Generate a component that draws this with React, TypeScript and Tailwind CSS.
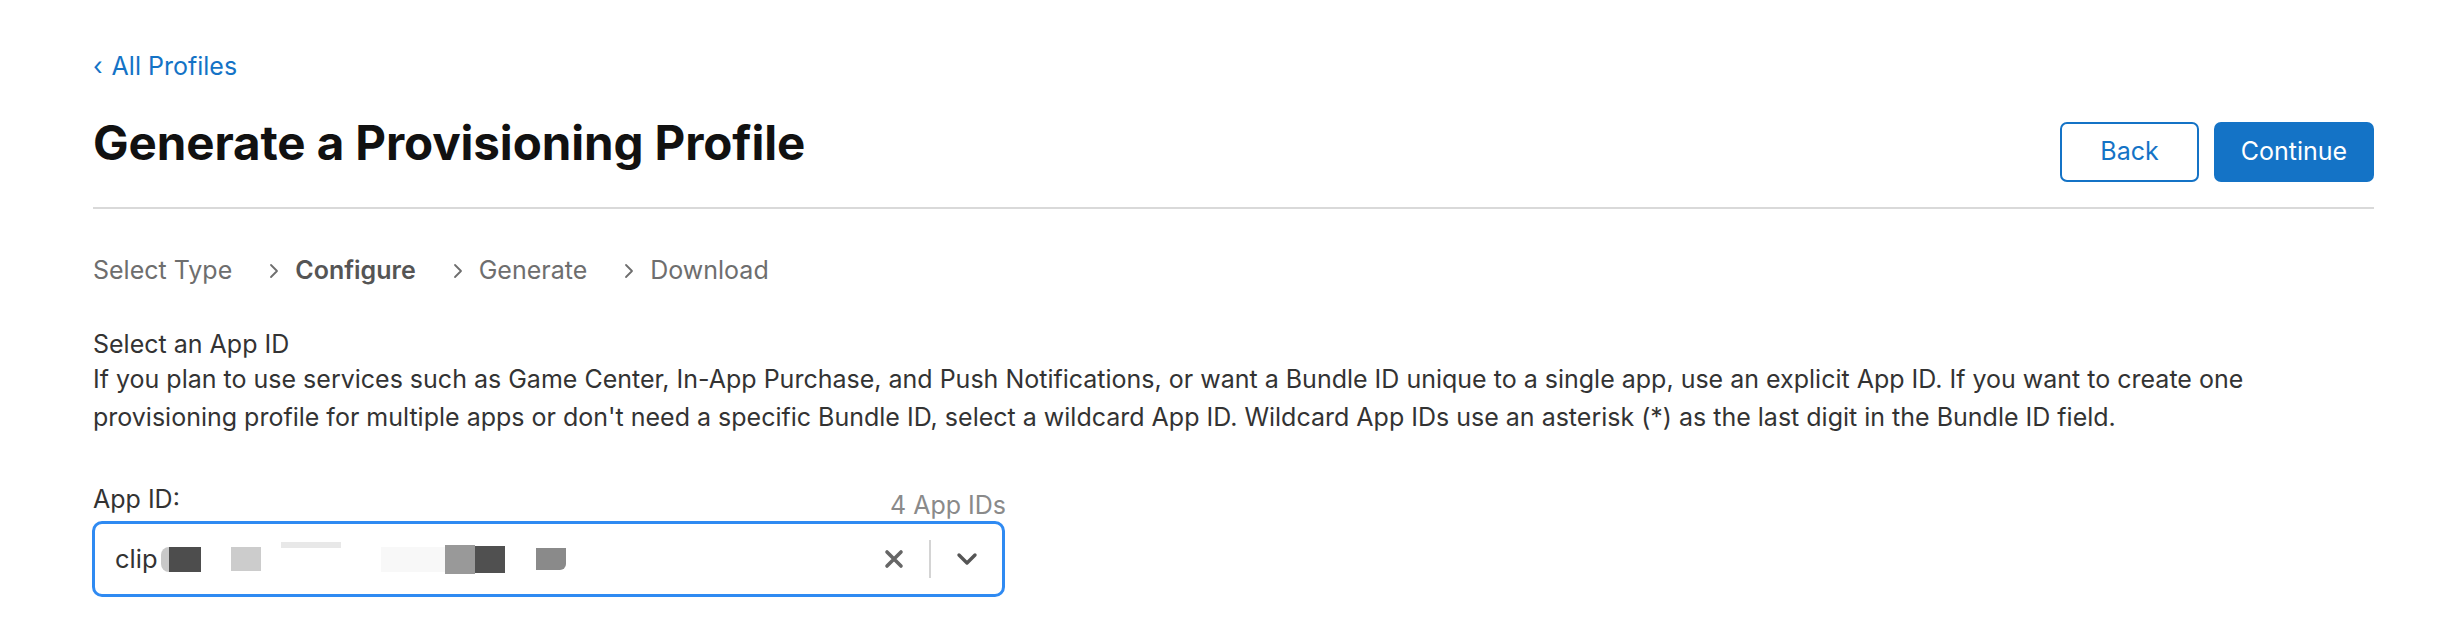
const font = { fontFamily: 'Inter, "Noto Sans", sans-serif' }

function Crumb({ label, active }: { label: string; active?: boolean }) {
  return (
    <span className={active ? 'font-semibold text-[#555]' : 'text-[#6e6e6e]'}>{label}</span>
  )
}

function Chevron() {
  return (
    <svg width="14" height="18" viewBox="0 0 14 18" className="ml-[35px] mr-[14px]">
      <path d="M4 3 L10 9 L4 15" fill="none" stroke="#6e6e6e" strokeWidth="1.8" strokeLinecap="round" strokeLinejoin="round" />
    </svg>
  )
}

export default function App() {
  return (
    <div className="min-h-screen bg-white" style={font}>
      <div className="pl-[93px] pt-[48px] w-[2374px]">
        <a className="flex items-center h-[38px] text-[25px] text-[#1473c6]">
          <span className="mr-[9px]">‹</span>All Profiles
        </a>

        <div className="flex justify-between items-start">
          <h1 className="mt-[28px] h-[58px] leading-[58px] text-[47.5px] font-bold text-[#111] tracking-[-0.1px]">
            Generate a Provisioning Profile
          </h1>
          <div className="flex gap-[15px] mt-[36px]">
            <button className="w-[139px] h-[60px] rounded-[7px] border-2 border-[#1473c6] text-[25px] text-[#1473c6]">
              Back
            </button>
            <button className="w-[160px] h-[60px] rounded-[7px] bg-[#1473c6] text-[25px] text-white">
              Continue
            </button>
          </div>
        </div>

        <div className="mt-[25px] border-t-2 border-[#d9d9d9]" />

        <div className="mt-[43px] flex items-center h-[38px] text-[25px]">
          <Crumb label="Select Type" />
          <Chevron />
          <Crumb label="Configure" active />
          <Chevron />
          <Crumb label="Generate" />
          <Chevron />
          <Crumb label="Download" />
        </div>

        <div className="mt-[38px] h-[32px] leading-[32px] text-[25px] text-[#333]">Select an App ID</div>
        <p className="text-[25px] leading-[38px] text-[#333]">
          If you plan to use services such as Game Center, In-App Purchase, and Push Notifications, or want a Bundle ID unique to a single app, use an explicit App ID. If you want to create one
          <br />
          provisioning profile for multiple apps or don't need a specific Bundle ID, select a wildcard App ID. Wildcard App IDs use an asterisk (*) as the last digit in the Bundle ID field.
        </p>

        <div className="mt-[45px] w-[913px] flex justify-between items-end">
          <span className="h-[36px] leading-[36px] text-[25px] text-[#333]">App ID:</span>
          <span className="text-[25px] leading-[32px] text-[#8a8a8a] -mb-[4px]">4 App IDs</span>
        </div>

        <div className="mt-[4px] -ml-[1px] w-[913px] h-[76px] rounded-[10px] border-[3px] border-[#2f8af2] flex items-center pl-[20px] pr-[24px]">
          <div className="flex-1 flex items-center text-[25.5px] text-[#333]">
            <span>clip</span>
            <span className="ml-[3px] w-[8px] h-[25px] rounded-l-full bg-[#c8c8c8]" />
            <span className="w-[32px] h-[25px] bg-[#4d4d4d]" />
            <span className="ml-[30px] w-[30px] h-[24px] bg-[#cccccc]" />
            <span className="ml-[20px] w-[60px] h-[6px] self-start mt-[2px] bg-[#e8e8e8]" />
            <span className="ml-[40px] w-[64px] h-[25px] bg-[#f8f8f8]" />
            <span className="w-[30px] h-[29px] bg-[#999999]" />
            <span className="w-[30px] h-[27px] bg-[#505050]" />
            <span className="ml-[31px] w-[30px] h-[22px] rounded-br-[6px] bg-[#8a8a8a]" />
          </div>
          <div className="flex items-center">
            <svg width="20" height="20" viewBox="0 0 20 20">
              <path d="M3 3 L17 17 M17 3 L3 17" stroke="#666" strokeWidth="3.6" strokeLinecap="round" />
            </svg>
            <div className="mx-[25px] w-[2px] h-[38px] bg-[#d4d4d4]" />
            <svg width="22" height="14" viewBox="0 0 22 14">
              <path d="M3 3 L11 11 L19 3" fill="none" stroke="#555" strokeWidth="3.4" strokeLinecap="round" strokeLinejoin="round" />
            </svg>
          </div>
        </div>
      </div>
    </div>
  )
}
